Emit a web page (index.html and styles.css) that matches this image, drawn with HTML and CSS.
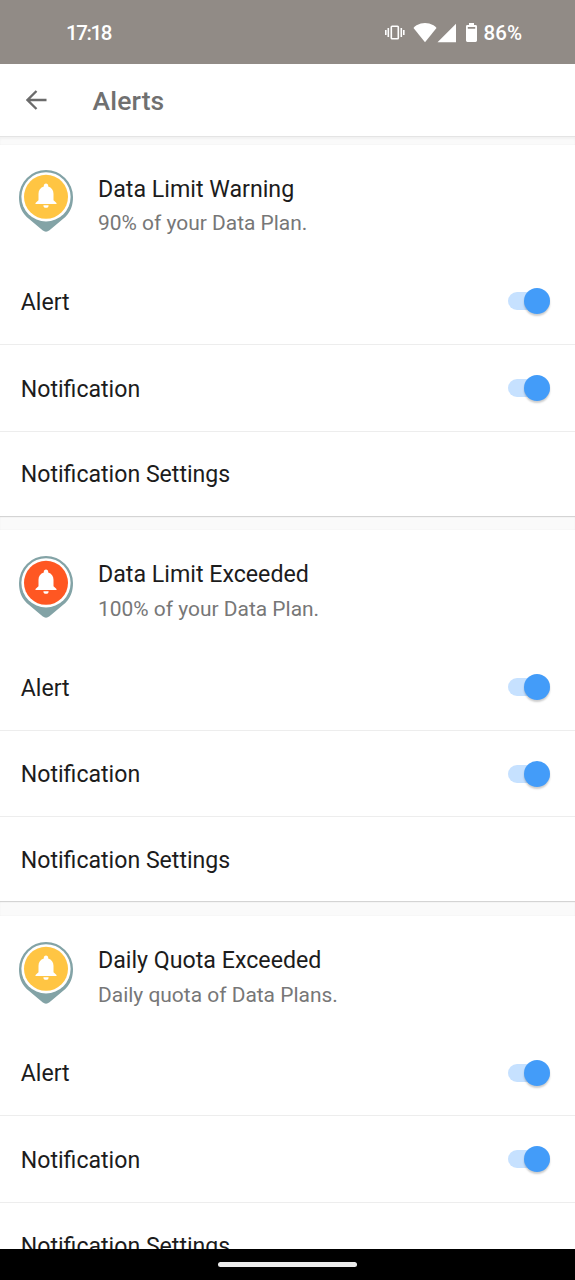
FILE: index.html
```html
<!DOCTYPE html>
<html lang="en">
<head>
<meta charset="utf-8">
<title>Alerts</title>
<link rel="stylesheet" href="styles.css">
</head>
<body>
<svg class="defs" width="0" height="0">
  <symbol id="pin" viewBox="0 0 54 62">
    <path class="pin-body" d="M27 0A27 27 0 0 1 54 27C54 34.500 52 40 48.500 44.500Q47 46.500 44.500 48.500L30.500 60.300Q27 63 23.500 60.300L9.500 48.500Q7 46.500 5.500 44.500C2 40 0 34.500 0 27A27 27 0 0 1 27 0Z"/>
    <circle class="pin-ring" cx="27" cy="26.800" r="24.600"/>
    <circle class="pin-fill" cx="27" cy="26.800" r="22"/>
    <path class="pin-bell" d="M27 13.600c1.300 0 2.200 1 2.200 2.200v.7c3.400 1 5.300 3.700 5.300 7.200v6.500l3 2.900v.9H16.500v-.9l3-2.900v-6.500c0-3.500 1.900-6.200 5.300-7.200v-.7c0-1.200.9-2.200 2.200-2.200ZM24.400 35.200h5.200a2.600 2.600 0 0 1-5.200 0Z"/>
  </symbol>
</svg>
<div class="screen">
  <header class="status">
    <span class="clock">17:18</span>
    <svg class="status-icons" viewBox="0 0 100 24">
      <g fill="none" stroke="#fff" stroke-width="1.600">
        <rect x="7.300" y="6.300" width="7" height="12.400" rx=".8"/>
        <path d="M1.800 10v5M4.300 8v9M17.300 8v9M19.800 10v5"/>
      </g>
      <g fill="#fff">
        <path d="M41 22.200 29.500 8Q30 6.600 32.500 5.200Q41 .8 49.500 5.200Q52 6.600 52.500 8Z"/>
        <path d="M72 3.800V22.200H53.500Z"/>
        <path fill-rule="evenodd" d="M85 3h5v2h1.600q1.400 0 1.400 1.400v14.200q0 1.400-1.400 1.400h-8.200q-1.400 0-1.400-1.400V6.400Q82 5 83.400 5H85ZM83.800 7v1.700h7.400V7Z"/>
      </g>
    </svg>
    <span class="battery">86%</span>
  </header>
  <nav class="toolbar">
    <svg class="back" viewBox="0 0 22 20"><path d="M20.500 10H2M10.500 1 1.500 10l9 9"/></svg>
    <h1 class="title">Alerts</h1>
  </nav>
  <main class="list">
    <section class="card">
      <div class="head">
        <svg class="pin warning"><use href="#pin"/></svg>
        <div><h2 class="name">Data Limit Warning</h2><p class="detail">90% of your Data Plan.</p></div>
      </div>
      <div class="row"><span>Alert</span><i class="switch"></i></div>
      <div class="row"><span>Notification</span><i class="switch"></i></div>
      <div class="row settings"><span>Notification Settings</span></div>
    </section>
    <section class="card">
      <div class="head">
        <svg class="pin exceeded"><use href="#pin"/></svg>
        <div><h2 class="name">Data Limit Exceeded</h2><p class="detail">100% of your Data Plan.</p></div>
      </div>
      <div class="row"><span>Alert</span><i class="switch"></i></div>
      <div class="row"><span>Notification</span><i class="switch"></i></div>
      <div class="row settings"><span>Notification Settings</span></div>
    </section>
    <section class="card">
      <div class="head">
        <svg class="pin warning"><use href="#pin"/></svg>
        <div><h2 class="name">Daily Quota Exceeded</h2><p class="detail">Daily quota of Data Plans.</p></div>
      </div>
      <div class="row"><span>Alert</span><i class="switch"></i></div>
      <div class="row"><span>Notification</span><i class="switch"></i></div>
      <div class="row settings"><span>Notification Settings</span></div>
    </section>
  </main>
  <footer class="navbar"><span class="handle"></span></footer>
</div>
</body>
</html>
```
FILE: styles.css
```css
* { box-sizing: border-box; margin: 0; }
body { font-family: Roboto, "Liberation Sans", sans-serif; color: #1c1c1c; background: #fff; }
.defs { display: block; }
.screen { width: 575px; height: 1280px; display: flex; flex-direction: column; overflow: hidden; }
.status { height: 64px; flex: none; background: #918b86; color: #fff; display: flex; align-items: center; padding: 2px 50px 0 66px; font-size: 20.500px; font-weight: 500; }
.clock { flex: 1; letter-spacing: -1.400px; }
.status-icons { width: 100px; height: 24px; margin: -2px 0 0; }
.battery { width: 41.500px; letter-spacing: .1px; }
.toolbar { height: 73px; flex: none; display: flex; align-items: center; padding-left: 25.500px; border-bottom: 1px solid #e4e4e4; }
.back { width: 22px; height: 20px; fill: none; stroke: #6b6b6b; stroke-width: 2.300; }
.title { margin-left: 45px; padding-top: 1px; font-size: 26.500px; font-weight: 500; color: #707070; letter-spacing: .15px; }
.list { flex: 1; min-height: 0; overflow: hidden; background: #fafafa; padding-top: 7.600px; display: flex; flex-direction: column; gap: 14.600px; box-shadow: inset 0 2px 2px #f2f2f2; }
.card { height: 371px; flex: none; background: #fff; box-shadow: 0 1px 1px #d4d4d4, 0 0 1px #e6e6e6; }
.head { height: 114px; display: flex; padding: 25.800px 0 0 19px; gap: 25px; }
.pin { width: 54px; height: 62px; flex: none; }
.pin-body { fill: #83a3a6; }
.pin-ring, .pin-bell { fill: #fff; }
.warning { fill: #ffc543; }
.exceeded { fill: #ff5722; }
.name { padding-top: 4.500px; font-size: 23.200px; line-height: 28px; font-weight: 400; white-space: nowrap; }
.detail { margin-top: 8.500px; font-size: 20.950px; line-height: 24px; color: #777; white-space: nowrap; }
.row { height: 86.600px; display: flex; align-items: center; justify-content: space-between; padding: 0 25px 0 20.800px; font-size: 23.100px; border-bottom: 1px solid #ededed; }
.row span { padding-top: 2.600px; }
.settings { height: 83.800px; border: 0; }
.switch { width: 42px; height: 18px; border-radius: 9px; background: #c6e1ff; display: flex; align-items: center; justify-content: flex-end; }
.switch::after { content: ""; width: 26px; height: 26px; border-radius: 50%; background: #439cf9; box-shadow: 0 2px 2px #0003; }
.navbar { height: 31px; flex: none; background: #000; display: flex; justify-content: center; align-items: center; }
.handle { width: 139px; height: 5px; border-radius: 3px; background: #ececec; }
```
